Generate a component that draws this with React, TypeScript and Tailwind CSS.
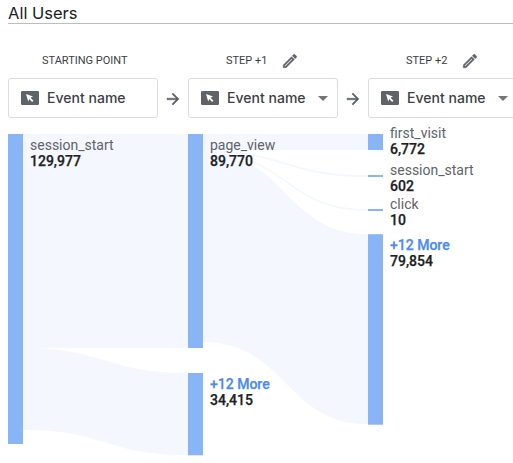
import React from "react";
import { MdArrowDropDown } from "react-icons/md";

function EventIcon() {
  return (
    <svg className="h-[14px] w-[18px] shrink-0" viewBox="0 0 18 14">
      <rect width="18" height="14" rx="1.2" fill="#5f6368" />
      <path d="M5 3l7 2.6-2.5 1.2 2.9 2.9-1.2 1.2-2.9-2.9-1.1 2.5z" fill="#fff" />
    </svg>
  );
}

function PencilIcon() {
  return (
    <svg className="size-[18px] shrink-0" viewBox="0 0 24 24" fill="#5f6368" stroke="#5f6368" strokeWidth="0.6">
      <path d="M14.06 9.02l.92.92L5.92 19H5v-.92l9.06-9.06M17.66 3c-.25 0-.51.1-.7.29l-1.83 1.83 3.75 3.75 1.83-1.83a.996.996 0 0 0 0-1.41l-2.34-2.34c-.2-.2-.45-.29-.71-.29zm-3.6 3.19L3 17.25V21h3.75L17.81 9.94l-3.75-3.75z" />
    </svg>
  );
}

function Picker({ menu }: { menu?: boolean }) {
  return (
    <div className="flex h-10 w-[150px] shrink-0 items-center rounded-[3px] border border-[#dadce0] bg-white pl-3">
      <EventIcon />
      <span className="ml-2 w-[80px] whitespace-nowrap pb-px font-['Inter','Roboto',sans-serif] text-[14px] font-medium leading-5 tracking-[0.02px] text-[#3c4043]">
        Event name
      </span>
      {menu && <MdArrowDropDown className="ml-1 size-6 shrink-0 text-[#757575]" />}
    </div>
  );
}

function Arrow() {
  return (
    <div className="flex w-[30px] shrink-0 items-center justify-center pt-[2px]">
      <svg className="size-[18px]" viewBox="0 0 24 24" fill="#5f6368" stroke="#5f6368" strokeWidth="0.7">
        <path d="M12 4l-1.41 1.41L16.17 11H4v2h12.17l-5.58 5.59L12 20l8-8z" />
      </svg>
    </div>
  );
}

function Heading({ label, editable }: { label: string; editable?: boolean }) {
  return (
    <div className={editable ? "flex h-5 w-[180px] shrink-0 items-center pl-[38px]" : "flex h-5 w-[180px] shrink-0 items-center pl-[34px]"}>
      <span className={editable ? "w-[55px] whitespace-nowrap" : "whitespace-nowrap"}>{label}</span>
      {editable && <PencilIcon />}
    </div>
  );
}

const nodes = [
  { x: 0, y: 0, h: 310, label: "session_start", value: "129,977", ty: 16 },
  { x: 180, y: 0, h: 214, label: "page_view", value: "89,770", ty: 16 },
  { x: 180, y: 239, h: 82.3, label: "+12 More", value: "34,415", ty: 255 },
  { x: 360, y: 0, h: 16, label: "first_visit", value: "6,772", ty: 4 },
  { x: 360, y: 41, h: 2, label: "session_start", value: "602", ty: 41 },
  { x: 360, y: 75, h: 2, label: "click", value: "10", ty: 75 },
  { x: 360, y: 100.2, h: 190.5, label: "+12 More", value: "79,854", ty: 116 },
];

const links = [
  { x: 15, s: 0, t: 0, h: 214 },
  { x: 15, s: 214, t: 239, h: 82 },
  { x: 195, s: 0, t: 0, h: 16 },
  { x: 195, s: 16.2, t: 41, h: 2 },
  { x: 195, s: 17.6, t: 75.1, h: 1.8 },
  { x: 195, s: 18, t: 100.3, h: 190 },
];

function ribbon(x: number, s: number, t: number, h: number) {
  const m = x + 82.5;
  const e = x + 165;
  return `M${x} ${s}C${m} ${s} ${m} ${t} ${e} ${t}V${t + h}C${m} ${t + h} ${m} ${s + h} ${x} ${s + h}Z`;
}

function Flow() {
  return (
    <svg className="block h-[329px] w-[505px] overflow-visible font-['Roboto',sans-serif] text-[14px]" viewBox="0 0 505 329">
      {links.map((l, i) => (
        <path key={i} d={ribbon(l.x, l.s, l.t, l.h)} fill="#f4f7fe" />
      ))}
      {nodes.map((n, i) => (
        <g key={i}>
          <rect x={n.x} y={n.y} width="15" height={n.h} fill="#8ab4f8" />
          <text x={n.x + 22} y={n.ty} className={n.label.startsWith("+") ? "fill-[#4a8af4] stroke-[#4a8af4] stroke-[0.25px] font-medium" : "fill-[#5f6368]"}>
            {n.label}
          </text>
          <text x={n.x + 22} y={n.ty + 16} className="fill-[#202124] stroke-[#202124] stroke-[0.25px] font-medium">
            {n.value}
          </text>
        </g>
      ))}
    </svg>
  );
}

export default function App() {
  return (
    <main className="flex h-[463px] w-[513px] flex-col overflow-hidden bg-white pl-2 font-['Roboto',sans-serif]">
      <header className="h-6 shrink-0 border-b border-[#bdbdbd] pt-[3px] font-['Inter','Roboto',sans-serif] text-[16.5px] leading-5 text-[#202124]">
        All Users
      </header>
      <div className="mt-[27px] flex shrink-0 text-[11px] text-[#3c4043]">
        <Heading label="STARTING POINT" />
        <Heading label="STEP +1" editable />
        <Heading label="STEP +2" editable />
      </div>
      <div className="mt-[7px] flex shrink-0">
        <Picker />
        <Arrow />
        <Picker menu />
        <Arrow />
        <Picker menu />
      </div>
      <div className="mt-4 shrink-0">
        <Flow />
      </div>
    </main>
  );
}
